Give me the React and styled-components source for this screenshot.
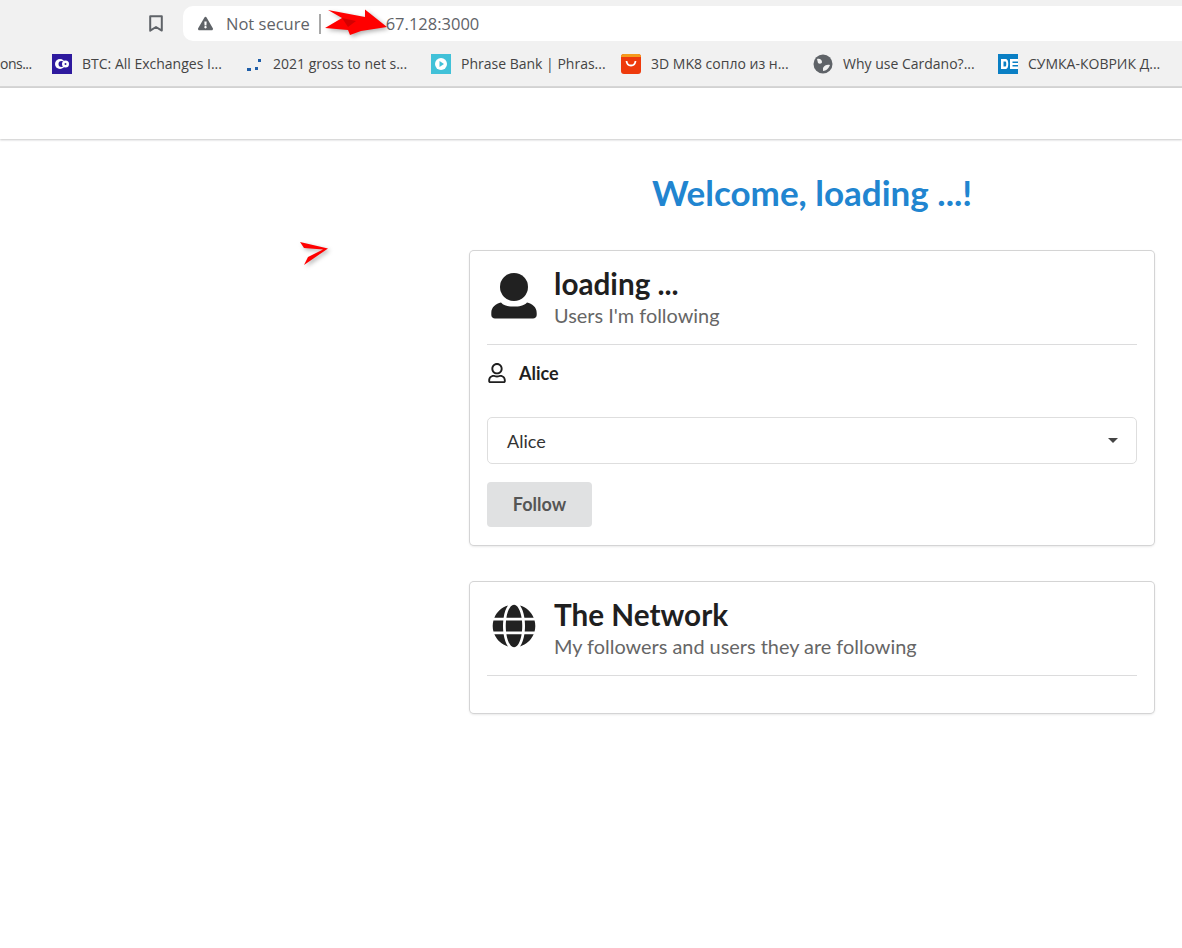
import React from 'react';
import styled, { createGlobalStyle } from 'styled-components';
import { FaGlobe, FaRegUser, FaExclamationTriangle } from 'react-icons/fa';

const GlobalStyle = createGlobalStyle`
  html, body {
    margin: 0;
    padding: 0;
    background: #fff;
    font-family: Lato, "Open Sans", sans-serif;
  }
`;

const Page = styled.div`
  position: relative;
  width: 1182px;
  height: 948px;
  overflow: hidden;
`;

const BrowserChrome = styled.div`
  height: 86px;
  background: #f1f1f1;
  border-bottom: 2px solid #d6d6d6;
  font-family: "Open Sans", sans-serif;
`;

const Toolbar = styled.div`
  display: flex;
  align-items: center;
  height: 35px;
  padding: 6px 0 0 149px;
`;

const BookmarkStar = styled.svg`
  width: 14px;
  height: 17px;
  margin-right: 20px;
  flex: none;
`;

const AddressBar = styled.div`
  flex: 1;
  height: 35px;
  display: flex;
  align-items: center;
  background: #fff;
  border-radius: 10px 0 0 10px;
  padding-left: 15px;
  font-size: 16.5px;
  color: #5f6368;
`;

const SecurityLabel = styled.span`
  margin-left: 13px;
  padding-right: 9px;
`;

const Separator = styled.span`
  width: 2px;
  height: 20px;
  background: #a8a8a8;
`;

const Url = styled.span`
  margin-left: 65px;
`;

const BookmarksBar = styled.div`
  display: flex;
  align-items: center;
  height: 45px;
  font-size: 14px;
  color: #444;
  white-space: nowrap;
`;

const Bookmark = styled.div`
  display: flex;
  align-items: center;
  gap: 10px;
  flex: none;
  width: ${(p) => p.$width}px;
`;

const ClippedBookmark = styled(Bookmark)`
  letter-spacing: -0.5px;
`;

const Favicon = styled.svg`
  width: 20px;
  height: 20px;
  flex: none;
`;

const NavBar = styled.div`
  height: 51px;
  background: #fff;
  box-shadow: 0 1px 2px rgba(34, 36, 38, 0.25);
`;

const Content = styled.div`
  display: grid;
  grid-template-columns: 684px;
  justify-content: end;
  padding: 33px 28px 0 0;
`;

const Title = styled.h1`
  margin: 0 0 39px;
  text-align: center;
  font-size: 35px;
  line-height: 40px;
  font-weight: 700;
  color: #2185d0;
`;

const Card = styled.div`
  box-sizing: border-box;
  margin-bottom: 37px;
  padding: 15px 17px 18px;
  background: #fff;
  border-radius: 4px;
  box-shadow: 0 1px 3px 0 #d4d4d5, 0 0 0 1px #d4d4d5;
`;

const CardHeader = styled.div`
  display: flex;
  align-items: center;
  gap: 13px;
  padding-bottom: 14px;
  border-bottom: 1px solid #dcdcdd;
`;

const HeaderIcon = styled.div`
  display: flex;
  justify-content: center;
  width: 54px;
  padding-bottom: ${(p) => p.$lift}px;
  color: #212121;
`;

const HeaderText = styled.div`
  display: flex;
  flex-direction: column;
`;

const HeaderTitle = styled.div`
  padding-top: 1px;
  font-size: 29.7px;
  line-height: 34px;
  font-weight: 700;
  color: #1f1f1f;
`;

const HeaderSub = styled.div`
  font-size: 19.9px;
  line-height: 29px;
  color: #666;
`;

const UserRow = styled.div`
  display: flex;
  align-items: center;
  gap: 12px;
  height: 56px;
  font-size: 18px;
  font-weight: 700;
  color: #1f1f1f;
`;

const Dropdown = styled.div`
  display: flex;
  align-items: center;
  justify-content: space-between;
  box-sizing: border-box;
  height: 47px;
  margin-top: 16px;
  padding: 0 18px 0 19px;
  border: 1px solid #dedede;
  border-radius: 5px;
  font-size: 18px;
  color: #333;
`;

const Caret = styled.span`
  width: 0;
  height: 0;
  border-left: 5px solid transparent;
  border-right: 5px solid transparent;
  border-top: 5px solid #444;
`;

const FollowButton = styled.button`
  display: block;
  width: 105px;
  height: 45px;
  margin-top: 18px;
  padding: 0 0 2px;
  border: 0;
  border-radius: 4px;
  background: #e0e1e2;
  font-family: inherit;
  font-size: 18px;
  font-weight: 700;
  color: #555;
`;

const NetworkBody = styled.div`
  height: 19px;
`;

const Annotation = styled.svg`
  position: absolute;
  left: 0;
  top: 0;
  width: 1182px;
  height: 948px;
  pointer-events: none;
  filter: drop-shadow(2px 2px 2px rgba(0, 0, 0, 0.3));
`;

const UserSolid = () => (
  <svg width="46" height="46" viewBox="0 0 46 46" fill="currentColor">
    <circle cx="23" cy="14" r="14" />
    <path d="M10 29.5C13 33 18 33.6 23 33.6S33 33 36 29.5C41 30.5 45.7 34 45.7 40V42C45.7 44 44 45.6 42 45.6H4C2 45.6 0.3 44 0.3 42V40C0.3 34 5 30.5 10 29.5Z" />
  </svg>
);

const bookmarks = [
  { label: 'BTC: All Exchanges I...', width: 191, icon: (
    <Favicon viewBox="0 0 20 20">
      <rect width="20" height="20" fill="#2e1a9e" />
      <circle cx="8" cy="10" r="5" fill="#fff" />
      <circle cx="9.5" cy="10" r="3" fill="#2e1a9e" />
      <circle cx="13.5" cy="10" r="3.5" fill="#fff" />
      <circle cx="13.5" cy="10" r="1" fill="#2e1a9e" />
    </Favicon>
  ) },
  { label: '2021 gross to net s...', width: 188, icon: (
    <Favicon viewBox="0 0 20 20">
      <rect x="4" y="14" width="4" height="3" fill="#1f5ea8" />
      <rect x="12" y="13" width="3" height="3" fill="#1f5ea8" />
      <rect x="15" y="5" width="3" height="3" fill="#1f5ea8" />
    </Favicon>
  ) },
  { label: 'Phrase Bank | Phras...', width: 190, icon: (
    <Favicon viewBox="0 0 20 20">
      <rect width="20" height="20" fill="#41c1d8" />
      <circle cx="10" cy="10" r="6" fill="#fff" />
      <path d="M8.5 7L13 10L8.5 13Z" fill="#41c1d8" />
    </Favicon>
  ) },
  { label: '3D MK8 сопло из н...', width: 192, icon: (
    <Favicon viewBox="0 0 20 20">
      <rect width="20" height="20" rx="3" fill="#ee3a0c" />
      <path d="M0 3C0 1 1 0 3 0H17C19 0 20 1 20 3Z" fill="#f59a1c" />
      <path d="M5.5 7C6 13 14 13 14.5 7" fill="none" stroke="#fff" strokeWidth="1.8" />
    </Favicon>
  ) },
  { label: 'Why use Cardano?...', width: 185, icon: (
    <Favicon viewBox="0 0 20 20">
      <circle cx="10" cy="10" r="9.5" fill="#5f6368" />
      <path d="M4 5C7 4 9 6 9 8C9 10 6 10 5 9ZM10 14C11 11 15 10 17 11C16 14 13 17 10 17Z" fill="#f1f1f1" />
    </Favicon>
  ) },
  { label: 'СУМКА-КОВРИК Д...', width: 184, icon: (
    <Favicon viewBox="0 0 20 20">
      <rect width="20" height="20" fill="#0a7fc4" />
      <path d="M3 5H8C11 5 11 15 8 15H3ZM5.5 7.5V12.5H7.5C8.5 12.5 8.5 7.5 7.5 7.5ZM12 5H20V7.5H14.5V9H20V11H14.5V12.5H20V15H12Z" fill="#fff" fillRule="evenodd" />
    </Favicon>
  ) },
];

const App = () => (
  <Page>
    <GlobalStyle />
    <BrowserChrome>
      <Toolbar>
        <BookmarkStar viewBox="0 0 14 17">
          <path d="M1.2 1.2H12.8V15.6L7 12L1.2 15.6Z" fill="none" stroke="#5f6368" strokeWidth="2" strokeLinejoin="round" />
        </BookmarkStar>
        <AddressBar>
          <FaExclamationTriangle size={15} />
          <SecurityLabel>Not secure</SecurityLabel>
          <Separator />
          <Url>67.128:3000</Url>
        </AddressBar>
      </Toolbar>
      <BookmarksBar>
        <ClippedBookmark $width={52}>ons...</ClippedBookmark>
        {bookmarks.map((b) => (
          <Bookmark key={b.label} $width={b.width}>
            {b.icon}
            {b.label}
          </Bookmark>
        ))}
      </BookmarksBar>
    </BrowserChrome>
    <NavBar />
    <Content>
      <Title>Welcome, loading ...!</Title>
      <Card>
        <CardHeader>
          <HeaderIcon $lift={4}><UserSolid /></HeaderIcon>
          <HeaderText>
            <HeaderTitle>loading ...</HeaderTitle>
            <HeaderSub>Users I'm following</HeaderSub>
          </HeaderText>
        </CardHeader>
        <UserRow>
          <FaRegUser size={20} />
          Alice
        </UserRow>
        <Dropdown>
          Alice
          <Caret />
        </Dropdown>
        <FollowButton>Follow</FollowButton>
      </Card>
      <Card>
        <CardHeader>
          <HeaderIcon $lift={7}><FaGlobe size={44} /></HeaderIcon>
          <HeaderText>
            <HeaderTitle>The Network</HeaderTitle>
            <HeaderSub>My followers and users they are following</HeaderSub>
          </HeaderText>
        </CardHeader>
        <NetworkBody />
      </Card>
    </Content>
    <Annotation viewBox="0 0 1182 948">
      <path d="M328 10L365 17L365 9.5L387 27L361 31L350 35L348 30L325 28L342 18Z" fill="#ff0000" />
      <path d="M342 18L356 21L348 27Z" fill="#d40000" />
      <path d="M300 242L328 248.5L304 265L308 257L323 249.5L304 248Z" fill="#ff0000" />
    </Annotation>
  </Page>
);

export default App;
